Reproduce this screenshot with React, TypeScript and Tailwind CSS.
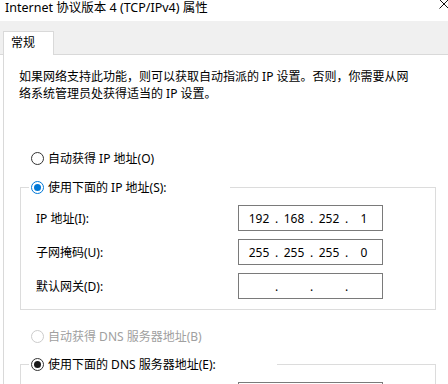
import React from 'react';

type RadioState = 'off' | 'on-focus' | 'on' | 'disabled';

function Radio({ state }: { state: RadioState }) {
  const ring =
    state === 'on-focus'
      ? 'border-[#0078d7]'
      : state === 'disabled'
        ? 'border-[#cccccc]'
        : 'border-[#333333]';
  return (
    <span className={`flex h-[13px] w-[13px] shrink-0 items-center justify-center rounded-full border bg-white ${ring}`}>
      {state === 'on-focus' && <span className="h-[7px] w-[7px] rounded-full bg-[#0078d7]" />}
      {state === 'on' && <span className="h-[7px] w-[7px] rounded-full bg-[#1a1a1a]" />}
    </span>
  );
}

function RadioRow({ state, label }: { state: RadioState; label: string }) {
  return (
    <div className="flex h-[17px] items-center gap-[4px]">
      <Radio state={state} />
      <span className={state === 'disabled' ? 'text-[#a0a0a0]' : 'text-black'}>{label}</span>
    </div>
  );
}

function IpBox({ parts }: { parts: string[] }) {
  return (
    <div className="flex h-[26px] w-[145px] items-center border border-[#7a7a7a] bg-white pl-[6px]">
      {parts.map((p, i) => (
        <React.Fragment key={i}>
          <span className="w-[28px] text-center">{p}</span>
          {i < 3 && <span className="w-[7px] text-center">.</span>}
        </React.Fragment>
      ))}
    </div>
  );
}

function FieldRow({ label, parts }: { label: string; parts: string[] }) {
  return (
    <div className="flex h-[26px] items-center">
      <span className="w-[202px]">{label}</span>
      <IpBox parts={parts} />
    </div>
  );
}

export default function App() {
  const empty = ['', '', '', ''];
  return (
    <div
      className="relative h-[384px] w-[448px] overflow-hidden bg-white text-[12px] leading-[17px] text-black"
      style={{ fontFamily: '"Noto Sans", "Noto Sans CJK SC", "Microsoft YaHei", sans-serif' }}
    >
      {/* 标题栏 */}
      <div className="flex h-[21px] items-start justify-between">
        <span className="pl-[5px] text-[12.5px] leading-[15px]">Internet 协议版本 4 (TCP/IPv4) 属性</span>
        <svg width="10" height="10" viewBox="0 0 10 10" className="-mr-[1px] mt-[-1px]">
          <path d="M0.5 0.5 L9.5 9.5 M9.5 0.5 L0.5 9.5" stroke="#111" strokeWidth="1" />
        </svg>
      </div>

      {/* 选项卡 */}
      <div className="flex h-[34px] items-end border-b border-[#d9d9d9] bg-[#f0f0f0]">
        <div className="-mb-px ml-[3px] h-[24px] w-[51px] border border-b-0 border-[#d9d9d9] bg-white pl-[7px] pt-[2px]">
          常规
        </div>
      </div>

      {/* 内容 */}
      <div className="ml-[3px] h-[330px] border-l border-[#d9d9d9]">
        <p className="pl-[15px] pt-[13px]">
          如果网络支持此功能，则可以获取自动指派的 IP 设置。否则，你需要从网
          <br />
          络系统管理员处获得适当的 IP 设置。
        </p>

        <div className="mt-[48px] pl-[27px]">
          <RadioRow state="off" label="自动获得 IP 地址(O)" />
        </div>

        <div className="relative ml-[16px] mt-[20px] w-[416px] border border-[#dcdcdc] pb-[10px] pl-[15px] pt-[17px]">
          <div className="absolute -top-[9px] left-[8px] w-[201px] bg-white pl-[2px]">
            <RadioRow state="on-focus" label="使用下面的 IP 地址(S):" />
          </div>
          <div className="flex flex-col gap-[8px]">
            <FieldRow label="IP 地址(I):" parts={['192', '168', '252', '1']} />
            <FieldRow label="子网掩码(U):" parts={['255', '255', '255', '0']} />
            <FieldRow label="默认网关(D):" parts={empty} />
          </div>
        </div>

        <div className="mt-[18px] pl-[27px]">
          <RadioRow state="disabled" label="自动获得 DNS 服务器地址(B)" />
        </div>

        <div className="relative ml-[16px] mt-[19px] h-[40px] w-[416px] border border-b-0 border-[#dcdcdc] pl-[217px] pt-[17px]">
          <div className="absolute -top-[9px] left-[8px] w-[248px] bg-white pl-[2px]">
            <RadioRow state="on" label="使用下面的 DNS 服务器地址(E):" />
          </div>
          {/* 首选 DNS 服务器输入框（下方被裁切） */}
          <div className="h-[26px] w-[145px] border border-[#7a7a7a] bg-white" />
        </div>
      </div>
    </div>
  );
}
